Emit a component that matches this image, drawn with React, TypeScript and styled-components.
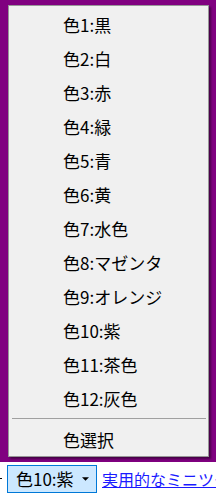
import React from "react";
import styled, { createGlobalStyle } from "styled-components";

const colors = ["色1:黒", "色2:白", "色3:赤", "色4:緑", "色5:青", "色6:黄", "色7:水色", "色8:マゼンタ", "色9:オレンジ", "色10:紫", "色11:茶色", "色12:灰色"];

const Global = createGlobalStyle`
    html, body {
        margin: 0;
        padding: 0;
        background: #ffffff;
        font-family: "Noto Sans CJK JP", "Noto Sans", sans-serif;
    }
`;

const App: React.FC = () => {
    return (
        <>
            <Global />
            <Style.Page>
                <Style.Backdrop>
                    <Style.Menu>
                        {colors.map((c) => (
                            <Style.Item key={c}>{c}</Style.Item>
                        ))}
                        <Style.Separator />
                        <Style.Item>色選択</Style.Item>
                    </Style.Menu>
                </Style.Backdrop>
                <Style.Bar>
                    <Style.Tail />
                    <Style.Combo>
                        <span>色10:紫</span>
                        <Style.Arrow viewBox="0 0 8 4">
                            <path d="M0 0 L8 0 L4 4 Z" fill="#000" />
                        </Style.Arrow>
                    </Style.Combo>
                    <Style.Link href="#">実用的なミニツー</Style.Link>
                </Style.Bar>
            </Style.Page>
        </>
    );
};

export default App;

const Style = {
    Page: styled.div`
        width: 216px;
        height: 495px;
        overflow: hidden;
        display: flex;
        flex-direction: column;
    `,

    Backdrop: styled.div`
        background: #800080;
        height: 462px;
        flex-shrink: 0;
        padding: 5px 0 0 8px;
        box-sizing: border-box;
    `,

    Menu: styled.div`
        width: 201px;
        height: 452px;
        box-sizing: border-box;
        background: #f0f0f0;
        border: 1px solid #979797;
        box-shadow: 2px 2px 2px rgba(0, 0, 0, 0.45);
        padding-top: 1px;
        display: flex;
        flex-direction: column;
    `,

    Item: styled.div`
        height: 34px;
        flex-shrink: 0;
        display: flex;
        align-items: center;
        padding-left: 54px;
        font-size: 17px;
        color: #000;
        white-space: nowrap;
    `,

    Separator: styled.div`
        height: 1px;
        margin: 3px 2px 3px 3px;
        background: #a0a0a0;
        flex-shrink: 0;
    `,

    Bar: styled.div`
        flex: 1;
        display: flex;
        align-items: center;
        background: #ffffff;
        white-space: nowrap;
        overflow: hidden;
    `,

    Tail: styled.div`
        width: 2px;
        height: 1px;
        background: #000;
        margin-right: 5px;
        flex-shrink: 0;
    `,

    Combo: styled.div`
        width: 90px;
        height: 28px;
        flex-shrink: 0;
        box-sizing: border-box;
        background: #cce8ff;
        border: 1px solid #0078d7;
        display: flex;
        align-items: center;
        justify-content: space-between;
        padding: 0 7px 0 8px;
        font-size: 17px;
        color: #000;
    `,

    Arrow: styled.svg`
        width: 7px;
        height: 4px;
    `,

    Link: styled.a`
        margin-left: 5px;
        font-size: 16px;
        color: #1a1aff;
        text-decoration: underline;
        flex-shrink: 0;
    `,
};
